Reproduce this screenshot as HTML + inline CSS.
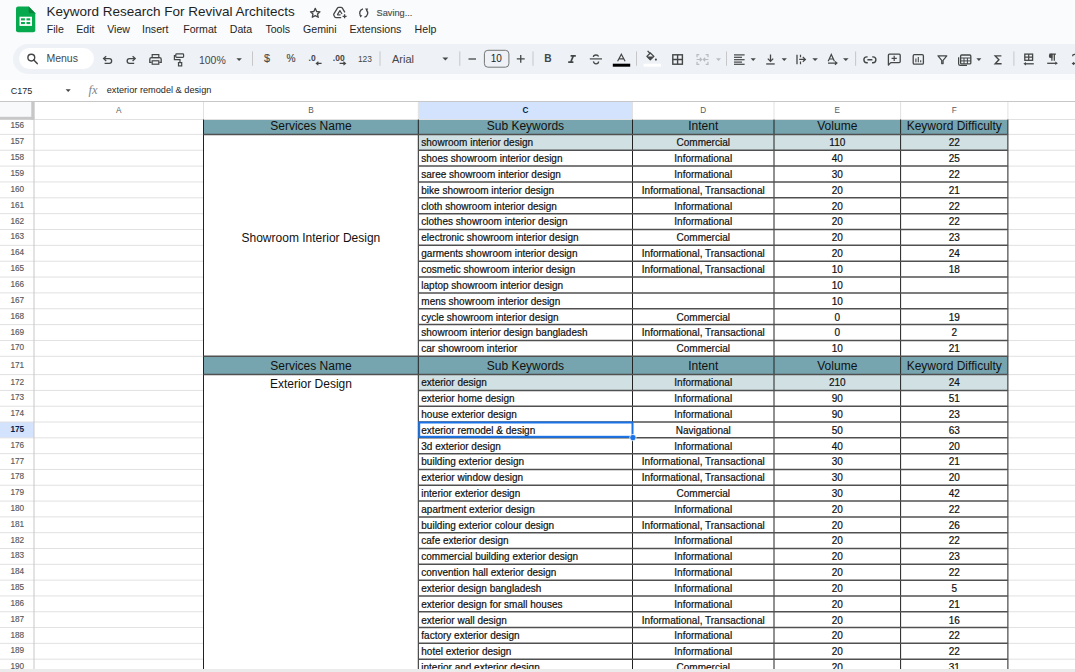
<!DOCTYPE html><html><head><meta charset="utf-8"><style>
html,body{margin:0;padding:0;width:1075px;height:672px;overflow:hidden;background:#fff;}
body{position:relative;font-family:"Liberation Sans", sans-serif;}
.t{position:absolute;white-space:nowrap;line-height:normal;}
.r{position:absolute;}
.b{-webkit-text-stroke:0.2px #111;}
.n{-webkit-text-stroke:0.15px #575a5e;}
svg{position:absolute;overflow:visible;}
</style></head><body>
<div class="r" style="left:0.00px;top:0.00px;width:1075.00px;height:79.50px;background:#f9fbfd;"></div>
<svg style="left:0;top:0" width="60" height="40" viewBox="0 0 60 40">
<path d="M18.2 6.4 H28.7 L35.3 13.3 V30.2 Q35.3 32.3 33.2 32.3 H18.2 Q16 32.3 16 30.2 V8.6 Q16 6.4 18.2 6.4 Z" fill="#06a94d"/>
<path d="M28.7 6.4 L35.3 13.3 H30.2 Q28.7 13.3 28.7 11.8 Z" fill="#05873b"/>
<rect x="19.5" y="16.7" width="12.5" height="9.2" fill="#fff"/>
<rect x="21" y="18.3" width="3.9" height="2.1" fill="#06a94d"/>
<rect x="26.5" y="18.3" width="3.7" height="2.1" fill="#06a94d"/>
<rect x="21" y="22.0" width="3.9" height="2.1" fill="#06a94d"/>
<rect x="26.5" y="22.0" width="3.7" height="2.1" fill="#06a94d"/>
</svg>
<div class="t" style="left:46.40px;top:4.18px;font-size:13.5px;color:#1f1f1f;font-weight:normal;">Keyword Research For Revival Architects</div>
<svg style="left:0;top:0" width="420" height="24" viewBox="0 0 420 24">
<path d="M315.25 8.3 L316.65 11.5 L320.0 11.8 L317.5 14.0 L318.25 17.3 L315.25 15.6 L312.25 17.3 L313.0 14.0 L310.5 11.8 L313.85 11.5 Z" fill="none" stroke="#444746" stroke-width="1.3" stroke-linejoin="round"/>
<path d="M341.2 17.6 H336.2 Q335.2 17.6 334.7 16.8 L333.9 15.4 Q333.5 14.6 333.9 13.9 L337.6 7.9 Q338.0 7.3 338.8 7.3 H341.0 Q341.8 7.3 342.2 7.9 L344.9 12.4" fill="none" stroke="#444746" stroke-width="1.3" stroke-linejoin="round"/>
<path d="M337.3 14.9 L339.9 10.6 L342.0 14.0" fill="none" stroke="#444746" stroke-width="1.2" stroke-linejoin="round"/>
<path d="M337.3 14.9 H340.6" stroke="#444746" stroke-width="1.2"/>
<path d="M344.6 14.3 V18.3 M342.6 16.3 H346.6" stroke="#444746" stroke-width="1.3"/>
<path d="M363.0 8.9 A4.3 4.3 0 0 0 361.0 16.2" fill="none" stroke="#444746" stroke-width="1.35"/>
<path d="M359.4 15.0 L362.4 15.4 L360.4 17.6 Z" fill="#444746"/>
<path d="M364.4 17.2 A4.3 4.3 0 0 0 366.4 9.9" fill="none" stroke="#444746" stroke-width="1.35"/>
<path d="M368.2 8.4 H365.0 L366.9 11.2 Z" fill="#444746"/>
</svg>
<div class="t n" style="left:376.60px;top:7.67px;font-size:9.2px;color:#444746;font-weight:normal;">Saving...</div>
<div class="t" style="left:46.80px;top:23.21px;font-size:10.6px;color:#1f1f1f;font-weight:normal;">File</div>
<div class="t" style="left:76.30px;top:23.21px;font-size:10.6px;color:#1f1f1f;font-weight:normal;">Edit</div>
<div class="t" style="left:107.20px;top:23.21px;font-size:10.6px;color:#1f1f1f;font-weight:normal;">View</div>
<div class="t" style="left:142.00px;top:23.21px;font-size:10.6px;color:#1f1f1f;font-weight:normal;">Insert</div>
<div class="t" style="left:183.20px;top:23.21px;font-size:10.6px;color:#1f1f1f;font-weight:normal;">Format</div>
<div class="t" style="left:229.80px;top:23.21px;font-size:10.6px;color:#1f1f1f;font-weight:normal;">Data</div>
<div class="t" style="left:265.40px;top:23.21px;font-size:10.6px;color:#1f1f1f;font-weight:normal;">Tools</div>
<div class="t" style="left:303.00px;top:23.21px;font-size:10.6px;color:#1f1f1f;font-weight:normal;">Gemini</div>
<div class="t" style="left:349.50px;top:23.21px;font-size:10.6px;color:#1f1f1f;font-weight:normal;">Extensions</div>
<div class="t" style="left:414.60px;top:23.21px;font-size:10.6px;color:#1f1f1f;font-weight:normal;">Help</div>
<div class="r" style="left:12.60px;top:44.00px;width:1100.00px;height:29.70px;background:#eef1f6;border-radius:15px;"></div>
<div class="r" style="left:18.60px;top:48.40px;width:75.90px;height:20.80px;background:#ffffff;border-radius:10.4px;"></div>
<svg style="left:0;top:0" width="1075" height="80" viewBox="0 0 1075 80"><circle cx="31.3" cy="57.6" r="3.4" fill="none" stroke="#444746" stroke-width="1.4"/><path d="M33.8 60.1 L37.2 63.6" stroke="#444746" stroke-width="1.5" stroke-linecap="round"/><path d="M104.2 58.6 H109.3 A2.35 2.35 0 0 1 109.3 63.3 H104.6" fill="none" stroke="#444746" stroke-width="1.3"/><path d="M106.2 56.3 L103.6 58.6 L106.2 60.9" fill="none" stroke="#444746" stroke-width="1.3"/><path d="M134.6 58.6 H129.5 A2.35 2.35 0 0 0 129.5 63.3 H134.2" fill="none" stroke="#444746" stroke-width="1.3"/><path d="M132.6 56.3 L135.2 58.6 L132.6 60.9" fill="none" stroke="#444746" stroke-width="1.3"/><rect x="152.2" y="54.6" width="6.6" height="3" fill="none" stroke="#444746" stroke-width="1.2"/><path d="M151.7 62.3 H149.8 V59.3 Q149.8 57.6 151.5 57.6 H159.5 Q161.2 57.6 161.2 59.3 V62.3 H159.3" fill="none" stroke="#444746" stroke-width="1.3"/><rect x="152.2" y="60.8" width="6.6" height="3.4" fill="none" stroke="#444746" stroke-width="1.2"/><rect x="175.8" y="53.9" width="7.8" height="3.4" rx="0.8" fill="none" stroke="#444746" stroke-width="1.2"/><path d="M175.8 55.6 H174.4 V59.6 H180.0 V62.6" fill="none" stroke="#444746" stroke-width="1.2"/><rect x="178.5" y="62.6" width="3.2" height="3.3" fill="none" stroke="#444746" stroke-width="1.2"/><path d="M236.4 58.3 H241.9 L239.15 61.099999999999994 Z" fill="#444746"/><path d="M442.4 57.6 H448.3 L445.35 60.4 Z" fill="#444746"/><path d="M716.0 58.3 H721.0 L718.5 61.099999999999994 Z" fill="#b9bcbf"/><path d="M750.6 58.3 H755.8 L753.2 61.099999999999994 Z" fill="#444746"/><path d="M781.6 58.3 H786.9 L784.25 61.099999999999994 Z" fill="#444746"/><path d="M812.3 58.3 H817.9 L815.0999999999999 61.099999999999994 Z" fill="#444746"/><path d="M843.0 58.3 H848.6 L845.8 61.099999999999994 Z" fill="#444746"/><path d="M976.4 58.3 H981.4 L978.9 61.099999999999994 Z" fill="#444746"/><rect x="252.0" y="51.4" width="1" height="14.4" fill="#c7c7c7"/><rect x="379.5" y="51.4" width="1" height="14.4" fill="#c7c7c7"/><rect x="459.3" y="51.4" width="1" height="14.4" fill="#c7c7c7"/><rect x="532.5" y="51.4" width="1" height="14.4" fill="#c7c7c7"/><rect x="636.0" y="51.4" width="1" height="14.4" fill="#c7c7c7"/><rect x="726.0" y="51.4" width="1" height="14.4" fill="#c7c7c7"/><rect x="855.1" y="51.4" width="1" height="14.4" fill="#c7c7c7"/><rect x="1013.4" y="51.4" width="1" height="14.4" fill="#c7c7c7"/><path d="M321.6 63.4 H316.6 M318.4 61.7 L316.3 63.4 L318.4 65.1" fill="none" stroke="#444746" stroke-width="1.1"/><path d="M339.6 63.4 H345.2 M343.4 61.7 L345.5 63.4 L343.4 65.1" fill="none" stroke="#444746" stroke-width="1.1"/><path d="M468.5 59.0 H476.0" stroke="#444746" stroke-width="1.3"/><path d="M516.8 58.8 H524.7 M520.75 54.9 V62.7" stroke="#444746" stroke-width="1.3"/><rect x="484.4" y="50.3" width="24.5" height="16.9" rx="3.5" fill="none" stroke="#747775" stroke-width="1"/><path d="M589.8 58.9 H602.0" stroke="#444746" stroke-width="1.2"/><path d="M598.6 56.6 Q598.0 55.0 596.0 55.0 Q593.4 55.0 593.4 57.0" fill="none" stroke="#444746" stroke-width="1.3"/><path d="M593.4 61.3 Q594.0 63.8 596.0 63.8 Q598.6 63.8 598.6 61.6" fill="none" stroke="#444746" stroke-width="1.3"/><path d="M617.6 61.2 L621.35 54.2 L625.1 61.2 M619.0 58.9 H623.7" fill="none" stroke="#444746" stroke-width="1.2"/><rect x="612.8" y="63.7" width="17.4" height="3.0" fill="#000"/><path d="M647.6 50.9 L650.4 53.7" stroke="#444746" stroke-width="1.3"/><path d="M646.9 56.4 L650.3 53.0 L653.9 56.4 L650.3 59.8 Z" fill="none" stroke="#444746" stroke-width="1.3" stroke-linejoin="round"/><path d="M646.9 56.4 H653.9 L650.3 59.8 Z" fill="#444746"/><circle cx="655.9" cy="59.6" r="1.05" fill="#444746"/><rect x="643.6" y="63.7" width="17.4" height="3.0" fill="#fff"/><rect x="672.8" y="54.8" width="9.6" height="9.4" fill="none" stroke="#444746" stroke-width="1.4"/><path d="M677.6 54.8 V64.2 M672.8 59.5 H682.4" stroke="#444746" stroke-width="1.4"/><path d="M699.3 54.7 H697.0 V57.2 M697.0 61.8 V64.3 H699.3 M705.7 54.7 H708.0 V57.2 M708.0 61.8 V64.3 H705.7" fill="none" stroke="#b9bcbf" stroke-width="1.2"/><path d="M696.6 59.5 H701.4 M699.8 57.8 L701.6 59.5 L699.8 61.2 M708.4 59.5 H703.6 M705.2 57.8 L703.4 59.5 L705.2 61.2" fill="none" stroke="#b9bcbf" stroke-width="1.2"/><rect x="734.0" y="54.3" width="10.6" height="1.2" fill="#444746"/><rect x="734.0" y="56.699999999999996" width="8.0" height="1.2" fill="#444746"/><rect x="734.0" y="59.1" width="10.6" height="1.2" fill="#444746"/><rect x="734.0" y="61.5" width="8.0" height="1.2" fill="#444746"/><rect x="734.0" y="63.699999999999996" width="10.6" height="1.2" fill="#444746"/><path d="M770.5 54.4 V61.2 M767.8 58.6 L770.5 61.4 L773.2 58.6" fill="none" stroke="#444746" stroke-width="1.3"/><rect x="766.2" y="63.3" width="8.5" height="1.3" fill="#444746"/><path d="M797.0 54.8 V64.2" stroke="#444746" stroke-width="1.3"/><path d="M799.2 59.4 H805.2 M802.8 57.0 L805.4 59.4 L802.8 61.8" fill="none" stroke="#444746" stroke-width="1.2"/><path d="M800.5 54.8 V57.2 M800.5 61.6 V64.2" stroke="#444746" stroke-width="1.2"/><path d="M828.2 61.2 L831.3 54.4 L834.4 61.2 M829.4 59.0 H833.2" fill="none" stroke="#444746" stroke-width="1.2"/><path d="M828.0 63.1 H836.6 M834.9 61.4 L837.0 63.1 L834.9 64.8" fill="none" stroke="#444746" stroke-width="1.1"/><path d="M867.6 56.9 H866.8 A2.9 2.9 0 0 0 866.8 62.7 H867.8 M872.2 56.9 H873.0 A2.9 2.9 0 0 1 873.0 62.7 H872.0 M867.4 59.8 H872.4" fill="none" stroke="#444746" stroke-width="1.4"/><path d="M888.4 65.0 V55.2 Q888.4 54.2 889.4 54.2 H899.2 Q900.2 54.2 900.2 55.2 V61.6 Q900.2 62.6 899.2 62.6 H890.8 Z" fill="none" stroke="#444746" stroke-width="1.3" stroke-linejoin="round"/><path d="M891.6 58.4 H896.8 M894.2 55.8 V61.0" stroke="#444746" stroke-width="1.2"/><rect x="913.2" y="54.7" width="10.2" height="9.4" rx="1.2" fill="none" stroke="#444746" stroke-width="1.3"/><path d="M915.9 58.6 V62.2 M918.3 56.9 V62.2 M920.7 60.2 V62.2" stroke="#444746" stroke-width="1.1"/><path d="M938.0 55.8 H946.8 L943.1 60.3 V63.6 H941.7 V60.3 Z" fill="none" stroke="#444746" stroke-width="1.2" stroke-linejoin="round"/><path d="M958.6 57.2 V63.8 Q958.6 65.4 960.2 65.4 H967" fill="none" stroke="#444746" stroke-width="1.2"/><rect x="960.6" y="55.0" width="10.2" height="8.9" rx="1" fill="none" stroke="#444746" stroke-width="1.3"/><path d="M960.6 58.0 H970.8 M960.6 60.9 H970.8 M964.0 58 V63.9 M967.4 58 V63.9" stroke="#444746" stroke-width="1.0"/><rect x="1024.8" y="54.1" width="7.8" height="6.2" fill="none" stroke="#444746" stroke-width="1.3"/><path d="M1028.7 54.1 V60.3 M1024.8 57.2 H1032.6" stroke="#444746" stroke-width="1.2"/><path d="M1033.8 63.8 H1025.0" stroke="#444746" stroke-width="1.3"/><path d="M1023.4 63.8 L1026.0 62.0 V65.6 Z" fill="#444746"/><path d="M1051.9 54.2 V60.7 M1054.3 54.2 V60.7 M1049.4 54.2 H1055.9" fill="none" stroke="#444746" stroke-width="1.3"/><path d="M1052.4 53.7 H1051.0 A2.2 2.2 0 0 0 1051.0 58.1 H1052.4 Z" fill="#444746"/><path d="M1047.2 63.3 H1056.0" stroke="#444746" stroke-width="1.3"/><path d="M1057.9 63.3 L1055.3 61.5 V65.1 Z" fill="#444746"/><path d="M1072.6 56.2 A1.8 1.8 0 0 1 1076.2 56.2" fill="none" stroke="#444746" stroke-width="1.3"/><path d="M1073.2 63.5 H1076" stroke="#444746" stroke-width="1.3"/><path d="M1071.6 63.5 L1074.0 61.8 V65.2 Z" fill="#444746"/><path d="M570.6 55.9 H575.8 M568.2 62.2 H573.4 M573.3 55.9 L570.7 62.2" fill="none" stroke="#444746" stroke-width="1.7"/><path d="M1001.4 55.9 H995.2 L998.9 59.8 L995.2 63.7 H1001.6" fill="none" stroke="#444746" stroke-width="1.4" stroke-linejoin="miter"/></svg>
<div class="t" style="left:46.40px;top:52.30px;font-size:10.5px;color:#444746;font-weight:normal;">Menus</div>
<div class="t" style="left:198.90px;top:53.90px;font-size:10.5px;color:#444746;font-weight:normal;">100%</div>
<div class="t n" style="left:264.00px;top:52.03px;font-size:10.8px;color:#444746;font-weight:normal;">$</div>
<div class="t n" style="left:286.60px;top:52.67px;font-size:10.2px;color:#444746;font-weight:normal;">%</div>
<div class="t" style="left:308.60px;top:52.91px;font-size:8.5px;color:#444746;font-weight:bold;">.0</div>
<div class="t" style="left:332.80px;top:52.91px;font-size:8.5px;color:#444746;font-weight:bold;">.00</div>
<div class="t" style="left:357.90px;top:54.40px;font-size:8.4px;color:#444746;font-weight:normal;">123</div>
<div class="t" style="left:392.00px;top:52.65px;font-size:11px;color:#444746;font-weight:normal;">Arial</div>
<div class="t" style="left:490.80px;top:53.25px;font-size:10px;color:#1f1f1f;font-weight:normal;">10</div>
<div class="t" style="left:544.20px;top:53.37px;font-size:10.2px;color:#444746;font-weight:bold;">B</div>
<div class="t" style="left:10.70px;top:85.86px;font-size:9.0px;color:#1f1f1f;font-weight:normal;">C175</div>
<svg style="left:0;top:0" width="80" height="100" viewBox="0 0 80 100"><path d="M65.6 89.2 H70.8 L68.2 92 Z" fill="#444746"/></svg>
<div class="t" style="left:88.60px;top:83.29px;font-size:12.5px;color:#80868b;font-weight:normal;font-family:'Liberation Serif',serif;font-style:italic;">fx</div>
<div class="t" style="left:106.70px;top:85.27px;font-size:9.2px;color:#1f1f1f;font-weight:normal;">exterior remodel &amp; design</div>
<svg style="left:0;top:0" width="1075" height="672" viewBox="0 0 1075 672"><rect x="0" y="101.5" width="34" height="18.0" fill="#f8f9fa"/><rect x="418.3" y="101.5" width="214.2" height="18.0" fill="#d3e3fd"/><rect x="0" y="422.03000000000003" width="34" height="15.810000000000002" fill="#d3e3fd"/><rect x="203.5" y="119.5" width="804.4" height="14.900000000000006" fill="#76a5af"/><rect x="203.5" y="356.3" width="804.4" height="18.30000000000001" fill="#76a5af"/><rect x="418.3" y="134.4" width="589.5999999999999" height="15.849999999999994" fill="#d0e0e3"/><rect x="418.3" y="374.6" width="589.5999999999999" height="15.810000000000002" fill="#d0e0e3"/><path d="M0 134.4 H203.5 M1007.9 134.4 H1075" stroke="#e1e1e1" stroke-width="1"/><path d="M0 150.25 H203.5 M1007.9 150.25 H1075" stroke="#e1e1e1" stroke-width="1"/><path d="M0 166.1 H203.5 M1007.9 166.1 H1075" stroke="#e1e1e1" stroke-width="1"/><path d="M0 181.95 H203.5 M1007.9 181.95 H1075" stroke="#e1e1e1" stroke-width="1"/><path d="M0 197.8 H203.5 M1007.9 197.8 H1075" stroke="#e1e1e1" stroke-width="1"/><path d="M0 213.65 H203.5 M1007.9 213.65 H1075" stroke="#e1e1e1" stroke-width="1"/><path d="M0 229.5 H203.5 M1007.9 229.5 H1075" stroke="#e1e1e1" stroke-width="1"/><path d="M0 245.35000000000002 H203.5 M1007.9 245.35000000000002 H1075" stroke="#e1e1e1" stroke-width="1"/><path d="M0 261.2 H203.5 M1007.9 261.2 H1075" stroke="#e1e1e1" stroke-width="1"/><path d="M0 277.05 H203.5 M1007.9 277.05 H1075" stroke="#e1e1e1" stroke-width="1"/><path d="M0 292.9 H203.5 M1007.9 292.9 H1075" stroke="#e1e1e1" stroke-width="1"/><path d="M0 308.75 H203.5 M1007.9 308.75 H1075" stroke="#e1e1e1" stroke-width="1"/><path d="M0 324.6 H203.5 M1007.9 324.6 H1075" stroke="#e1e1e1" stroke-width="1"/><path d="M0 340.45 H203.5 M1007.9 340.45 H1075" stroke="#e1e1e1" stroke-width="1"/><path d="M0 356.3 H203.5 M1007.9 356.3 H1075" stroke="#e1e1e1" stroke-width="1"/><path d="M0 374.6 H203.5 M1007.9 374.6 H1075" stroke="#e1e1e1" stroke-width="1"/><path d="M0 390.41 H203.5 M1007.9 390.41 H1075" stroke="#e1e1e1" stroke-width="1"/><path d="M0 406.22 H203.5 M1007.9 406.22 H1075" stroke="#e1e1e1" stroke-width="1"/><path d="M0 422.03000000000003 H203.5 M1007.9 422.03000000000003 H1075" stroke="#e1e1e1" stroke-width="1"/><path d="M0 437.84000000000003 H203.5 M1007.9 437.84000000000003 H1075" stroke="#e1e1e1" stroke-width="1"/><path d="M0 453.65000000000003 H203.5 M1007.9 453.65000000000003 H1075" stroke="#e1e1e1" stroke-width="1"/><path d="M0 469.46000000000004 H203.5 M1007.9 469.46000000000004 H1075" stroke="#e1e1e1" stroke-width="1"/><path d="M0 485.27000000000004 H203.5 M1007.9 485.27000000000004 H1075" stroke="#e1e1e1" stroke-width="1"/><path d="M0 501.08000000000004 H203.5 M1007.9 501.08000000000004 H1075" stroke="#e1e1e1" stroke-width="1"/><path d="M0 516.89 H203.5 M1007.9 516.89 H1075" stroke="#e1e1e1" stroke-width="1"/><path d="M0 532.7 H203.5 M1007.9 532.7 H1075" stroke="#e1e1e1" stroke-width="1"/><path d="M0 548.51 H203.5 M1007.9 548.51 H1075" stroke="#e1e1e1" stroke-width="1"/><path d="M0 564.32 H203.5 M1007.9 564.32 H1075" stroke="#e1e1e1" stroke-width="1"/><path d="M0 580.13 H203.5 M1007.9 580.13 H1075" stroke="#e1e1e1" stroke-width="1"/><path d="M0 595.94 H203.5 M1007.9 595.94 H1075" stroke="#e1e1e1" stroke-width="1"/><path d="M0 611.75 H203.5 M1007.9 611.75 H1075" stroke="#e1e1e1" stroke-width="1"/><path d="M0 627.5600000000001 H203.5 M1007.9 627.5600000000001 H1075" stroke="#e1e1e1" stroke-width="1"/><path d="M0 643.37 H203.5 M1007.9 643.37 H1075" stroke="#e1e1e1" stroke-width="1"/><path d="M0 659.1800000000001 H203.5 M1007.9 659.1800000000001 H1075" stroke="#e1e1e1" stroke-width="1"/><path d="M0 674.99 H203.5 M1007.9 674.99 H1075" stroke="#e1e1e1" stroke-width="1"/><path d="M203.5 101.5 V119.5" stroke="#e1e1e1" stroke-width="1"/><path d="M418.3 101.5 V119.5" stroke="#e1e1e1" stroke-width="1"/><path d="M632.5 101.5 V119.5" stroke="#e1e1e1" stroke-width="1"/><path d="M774.0 101.5 V119.5" stroke="#e1e1e1" stroke-width="1"/><path d="M900.6 101.5 V119.5" stroke="#e1e1e1" stroke-width="1"/><path d="M1007.9 101.5 V119.5" stroke="#e1e1e1" stroke-width="1"/><path d="M34.0 101.5 V672" stroke="#c7c7c7" stroke-width="1"/><path d="M0 101.5 H1075" stroke="#c7c7c7" stroke-width="1"/><path d="M34 119.5 H1075" stroke="#e1e1e1" stroke-width="1"/><rect x="0" y="116.8" width="34.3" height="3" fill="#c7c7c7"/><rect x="31.3" y="101.5" width="3" height="18.3" fill="#c7c7c7"/><path d="M203.5 119.5 V672" stroke="#222222" stroke-width="1"/><path d="M418.3 119.5 V672" stroke="#222222" stroke-width="1"/><path d="M632.5 119.5 V672" stroke="#222222" stroke-width="1"/><path d="M774.0 119.5 V672" stroke="#222222" stroke-width="1"/><path d="M900.6 119.5 V672" stroke="#222222" stroke-width="1"/><path d="M1007.9 119.5 V672" stroke="#222222" stroke-width="1"/><path d="M418.3 134.4 H1007.9" stroke="#505050" stroke-width="1.5"/><path d="M418.3 150.25 H1007.9" stroke="#505050" stroke-width="1.5"/><path d="M418.3 166.1 H1007.9" stroke="#505050" stroke-width="1.5"/><path d="M418.3 181.95 H1007.9" stroke="#505050" stroke-width="1.5"/><path d="M418.3 197.8 H1007.9" stroke="#505050" stroke-width="1.5"/><path d="M418.3 213.65 H1007.9" stroke="#505050" stroke-width="1.5"/><path d="M418.3 229.5 H1007.9" stroke="#505050" stroke-width="1.5"/><path d="M418.3 245.35000000000002 H1007.9" stroke="#505050" stroke-width="1.5"/><path d="M418.3 261.2 H1007.9" stroke="#505050" stroke-width="1.5"/><path d="M418.3 277.05 H1007.9" stroke="#505050" stroke-width="1.5"/><path d="M418.3 292.9 H1007.9" stroke="#505050" stroke-width="1.5"/><path d="M418.3 308.75 H1007.9" stroke="#505050" stroke-width="1.5"/><path d="M418.3 324.6 H1007.9" stroke="#505050" stroke-width="1.5"/><path d="M418.3 340.45 H1007.9" stroke="#505050" stroke-width="1.5"/><path d="M418.3 356.3 H1007.9" stroke="#505050" stroke-width="1.5"/><path d="M418.3 374.6 H1007.9" stroke="#505050" stroke-width="1.5"/><path d="M418.3 390.41 H1007.9" stroke="#505050" stroke-width="1.5"/><path d="M418.3 406.22 H1007.9" stroke="#505050" stroke-width="1.5"/><path d="M418.3 422.03000000000003 H1007.9" stroke="#505050" stroke-width="1.5"/><path d="M418.3 437.84000000000003 H1007.9" stroke="#505050" stroke-width="1.5"/><path d="M418.3 453.65000000000003 H1007.9" stroke="#505050" stroke-width="1.5"/><path d="M418.3 469.46000000000004 H1007.9" stroke="#505050" stroke-width="1.5"/><path d="M418.3 485.27000000000004 H1007.9" stroke="#505050" stroke-width="1.5"/><path d="M418.3 501.08000000000004 H1007.9" stroke="#505050" stroke-width="1.5"/><path d="M418.3 516.89 H1007.9" stroke="#505050" stroke-width="1.5"/><path d="M418.3 532.7 H1007.9" stroke="#505050" stroke-width="1.5"/><path d="M418.3 548.51 H1007.9" stroke="#505050" stroke-width="1.5"/><path d="M418.3 564.32 H1007.9" stroke="#505050" stroke-width="1.5"/><path d="M418.3 580.13 H1007.9" stroke="#505050" stroke-width="1.5"/><path d="M418.3 595.94 H1007.9" stroke="#505050" stroke-width="1.5"/><path d="M418.3 611.75 H1007.9" stroke="#505050" stroke-width="1.5"/><path d="M418.3 627.5600000000001 H1007.9" stroke="#505050" stroke-width="1.5"/><path d="M418.3 643.37 H1007.9" stroke="#505050" stroke-width="1.5"/><path d="M418.3 659.1800000000001 H1007.9" stroke="#505050" stroke-width="1.5"/><path d="M203.5 134.4 H418.3" stroke="#505050" stroke-width="1.5"/><path d="M203.5 356.3 H418.3" stroke="#505050" stroke-width="1.5"/><path d="M203.5 374.6 H418.3" stroke="#505050" stroke-width="1.5"/></svg>
<div class="t" style="left:88.75px;width:60px;text-align:center;top:105.68px;font-size:8.2px;color:#575a5e;font-weight:normal;">A</div>
<div class="t" style="left:280.90px;width:60px;text-align:center;top:105.68px;font-size:8.2px;color:#575a5e;font-weight:normal;">B</div>
<div class="t" style="left:495.40px;width:60px;text-align:center;top:105.68px;font-size:8.2px;color:#041e49;font-weight:bold;">C</div>
<div class="t" style="left:673.25px;width:60px;text-align:center;top:105.68px;font-size:8.2px;color:#575a5e;font-weight:normal;">D</div>
<div class="t" style="left:807.30px;width:60px;text-align:center;top:105.68px;font-size:8.2px;color:#575a5e;font-weight:normal;">E</div>
<div class="t" style="left:924.25px;width:60px;text-align:center;top:105.68px;font-size:8.2px;color:#575a5e;font-weight:normal;">F</div>
<div class="t n" style="left:0.30px;width:34px;text-align:center;top:120.58px;font-size:8.2px;color:#575a5e;font-weight:normal;">156</div>
<div class="t n" style="left:0.30px;width:34px;text-align:center;top:137.38px;font-size:8.2px;color:#575a5e;font-weight:normal;">157</div>
<div class="t n" style="left:0.30px;width:34px;text-align:center;top:153.23px;font-size:8.2px;color:#575a5e;font-weight:normal;">158</div>
<div class="t n" style="left:0.30px;width:34px;text-align:center;top:169.08px;font-size:8.2px;color:#575a5e;font-weight:normal;">159</div>
<div class="t n" style="left:0.30px;width:34px;text-align:center;top:184.93px;font-size:8.2px;color:#575a5e;font-weight:normal;">160</div>
<div class="t n" style="left:0.30px;width:34px;text-align:center;top:200.78px;font-size:8.2px;color:#575a5e;font-weight:normal;">161</div>
<div class="t n" style="left:0.30px;width:34px;text-align:center;top:216.63px;font-size:8.2px;color:#575a5e;font-weight:normal;">162</div>
<div class="t n" style="left:0.30px;width:34px;text-align:center;top:232.48px;font-size:8.2px;color:#575a5e;font-weight:normal;">163</div>
<div class="t n" style="left:0.30px;width:34px;text-align:center;top:248.33px;font-size:8.2px;color:#575a5e;font-weight:normal;">164</div>
<div class="t n" style="left:0.30px;width:34px;text-align:center;top:264.18px;font-size:8.2px;color:#575a5e;font-weight:normal;">165</div>
<div class="t n" style="left:0.30px;width:34px;text-align:center;top:280.03px;font-size:8.2px;color:#575a5e;font-weight:normal;">166</div>
<div class="t n" style="left:0.30px;width:34px;text-align:center;top:295.88px;font-size:8.2px;color:#575a5e;font-weight:normal;">167</div>
<div class="t n" style="left:0.30px;width:34px;text-align:center;top:311.73px;font-size:8.2px;color:#575a5e;font-weight:normal;">168</div>
<div class="t n" style="left:0.30px;width:34px;text-align:center;top:327.58px;font-size:8.2px;color:#575a5e;font-weight:normal;">169</div>
<div class="t n" style="left:0.30px;width:34px;text-align:center;top:343.43px;font-size:8.2px;color:#575a5e;font-weight:normal;">170</div>
<div class="t n" style="left:0.30px;width:34px;text-align:center;top:360.58px;font-size:8.2px;color:#575a5e;font-weight:normal;">171</div>
<div class="t n" style="left:0.30px;width:34px;text-align:center;top:377.58px;font-size:8.2px;color:#575a5e;font-weight:normal;">172</div>
<div class="t n" style="left:0.30px;width:34px;text-align:center;top:393.39px;font-size:8.2px;color:#575a5e;font-weight:normal;">173</div>
<div class="t n" style="left:0.30px;width:34px;text-align:center;top:409.20px;font-size:8.2px;color:#575a5e;font-weight:normal;">174</div>
<div class="t" style="left:0.30px;width:34px;text-align:center;top:425.01px;font-size:8.2px;color:#041e49;font-weight:bold;">175</div>
<div class="t n" style="left:0.30px;width:34px;text-align:center;top:440.82px;font-size:8.2px;color:#575a5e;font-weight:normal;">176</div>
<div class="t n" style="left:0.30px;width:34px;text-align:center;top:456.63px;font-size:8.2px;color:#575a5e;font-weight:normal;">177</div>
<div class="t n" style="left:0.30px;width:34px;text-align:center;top:472.44px;font-size:8.2px;color:#575a5e;font-weight:normal;">178</div>
<div class="t n" style="left:0.30px;width:34px;text-align:center;top:488.25px;font-size:8.2px;color:#575a5e;font-weight:normal;">179</div>
<div class="t n" style="left:0.30px;width:34px;text-align:center;top:504.06px;font-size:8.2px;color:#575a5e;font-weight:normal;">180</div>
<div class="t n" style="left:0.30px;width:34px;text-align:center;top:519.87px;font-size:8.2px;color:#575a5e;font-weight:normal;">181</div>
<div class="t n" style="left:0.30px;width:34px;text-align:center;top:535.68px;font-size:8.2px;color:#575a5e;font-weight:normal;">182</div>
<div class="t n" style="left:0.30px;width:34px;text-align:center;top:551.49px;font-size:8.2px;color:#575a5e;font-weight:normal;">183</div>
<div class="t n" style="left:0.30px;width:34px;text-align:center;top:567.30px;font-size:8.2px;color:#575a5e;font-weight:normal;">184</div>
<div class="t n" style="left:0.30px;width:34px;text-align:center;top:583.11px;font-size:8.2px;color:#575a5e;font-weight:normal;">185</div>
<div class="t n" style="left:0.30px;width:34px;text-align:center;top:598.92px;font-size:8.2px;color:#575a5e;font-weight:normal;">186</div>
<div class="t n" style="left:0.30px;width:34px;text-align:center;top:614.73px;font-size:8.2px;color:#575a5e;font-weight:normal;">187</div>
<div class="t n" style="left:0.30px;width:34px;text-align:center;top:630.54px;font-size:8.2px;color:#575a5e;font-weight:normal;">188</div>
<div class="t n" style="left:0.30px;width:34px;text-align:center;top:646.35px;font-size:8.2px;color:#575a5e;font-weight:normal;">189</div>
<div class="t n" style="left:0.30px;width:34px;text-align:center;top:662.16px;font-size:8.2px;color:#575a5e;font-weight:normal;">190</div>
<div class="t" style="left:210.90px;width:200px;text-align:center;top:118.74px;font-size:12px;color:#111111;font-weight:normal;">Services Name</div>
<div class="t" style="left:425.40px;width:200px;text-align:center;top:118.74px;font-size:12px;color:#111111;font-weight:normal;">Sub Keywords</div>
<div class="t" style="left:603.25px;width:200px;text-align:center;top:118.74px;font-size:12px;color:#111111;font-weight:normal;">Intent</div>
<div class="t" style="left:737.30px;width:200px;text-align:center;top:118.74px;font-size:12px;color:#111111;font-weight:normal;">Volume</div>
<div class="t" style="left:854.25px;width:200px;text-align:center;top:118.74px;font-size:12px;color:#111111;font-weight:normal;">Keyword Difficulty</div>
<div class="t" style="left:210.90px;width:200px;text-align:center;top:358.54px;font-size:12px;color:#111111;font-weight:normal;">Services Name</div>
<div class="t" style="left:425.40px;width:200px;text-align:center;top:358.54px;font-size:12px;color:#111111;font-weight:normal;">Sub Keywords</div>
<div class="t" style="left:603.25px;width:200px;text-align:center;top:358.54px;font-size:12px;color:#111111;font-weight:normal;">Intent</div>
<div class="t" style="left:737.30px;width:200px;text-align:center;top:358.54px;font-size:12px;color:#111111;font-weight:normal;">Volume</div>
<div class="t" style="left:854.25px;width:200px;text-align:center;top:358.54px;font-size:12px;color:#111111;font-weight:normal;">Keyword Difficulty</div>
<div class="t" style="left:205.90px;width:210px;text-align:center;top:231.04px;font-size:12px;color:#111111;font-weight:normal;">Showroom Interior Design</div>
<div class="t" style="left:205.90px;width:210px;text-align:center;top:376.74px;font-size:12px;color:#111111;font-weight:normal;">Exterior Design</div>
<div class="t b" style="left:421.30px;top:137.15px;font-size:10px;color:#111111;font-weight:normal;">showroom interior design</div>
<div class="t b" style="left:633.25px;width:140px;text-align:center;top:137.15px;font-size:10px;color:#111111;font-weight:normal;">Commercial</div>
<div class="t b" style="left:777.30px;width:120px;text-align:center;top:137.15px;font-size:10px;color:#111111;font-weight:normal;">110</div>
<div class="t b" style="left:904.25px;width:100px;text-align:center;top:137.15px;font-size:10px;color:#111111;font-weight:normal;">22</div>
<div class="t b" style="left:421.30px;top:153.00px;font-size:10px;color:#111111;font-weight:normal;">shoes showroom interior design</div>
<div class="t b" style="left:633.25px;width:140px;text-align:center;top:153.00px;font-size:10px;color:#111111;font-weight:normal;">Informational</div>
<div class="t b" style="left:777.30px;width:120px;text-align:center;top:153.00px;font-size:10px;color:#111111;font-weight:normal;">40</div>
<div class="t b" style="left:904.25px;width:100px;text-align:center;top:153.00px;font-size:10px;color:#111111;font-weight:normal;">25</div>
<div class="t b" style="left:421.30px;top:168.85px;font-size:10px;color:#111111;font-weight:normal;">saree showroom interior design</div>
<div class="t b" style="left:633.25px;width:140px;text-align:center;top:168.85px;font-size:10px;color:#111111;font-weight:normal;">Informational</div>
<div class="t b" style="left:777.30px;width:120px;text-align:center;top:168.85px;font-size:10px;color:#111111;font-weight:normal;">30</div>
<div class="t b" style="left:904.25px;width:100px;text-align:center;top:168.85px;font-size:10px;color:#111111;font-weight:normal;">22</div>
<div class="t b" style="left:421.30px;top:184.70px;font-size:10px;color:#111111;font-weight:normal;">bike showroom interior design</div>
<div class="t b" style="left:633.25px;width:140px;text-align:center;top:184.70px;font-size:10px;color:#111111;font-weight:normal;">Informational, Transactional</div>
<div class="t b" style="left:777.30px;width:120px;text-align:center;top:184.70px;font-size:10px;color:#111111;font-weight:normal;">20</div>
<div class="t b" style="left:904.25px;width:100px;text-align:center;top:184.70px;font-size:10px;color:#111111;font-weight:normal;">21</div>
<div class="t b" style="left:421.30px;top:200.55px;font-size:10px;color:#111111;font-weight:normal;">cloth showroom interior design</div>
<div class="t b" style="left:633.25px;width:140px;text-align:center;top:200.55px;font-size:10px;color:#111111;font-weight:normal;">Informational</div>
<div class="t b" style="left:777.30px;width:120px;text-align:center;top:200.55px;font-size:10px;color:#111111;font-weight:normal;">20</div>
<div class="t b" style="left:904.25px;width:100px;text-align:center;top:200.55px;font-size:10px;color:#111111;font-weight:normal;">22</div>
<div class="t b" style="left:421.30px;top:216.40px;font-size:10px;color:#111111;font-weight:normal;">clothes showroom interior design</div>
<div class="t b" style="left:633.25px;width:140px;text-align:center;top:216.40px;font-size:10px;color:#111111;font-weight:normal;">Informational</div>
<div class="t b" style="left:777.30px;width:120px;text-align:center;top:216.40px;font-size:10px;color:#111111;font-weight:normal;">20</div>
<div class="t b" style="left:904.25px;width:100px;text-align:center;top:216.40px;font-size:10px;color:#111111;font-weight:normal;">22</div>
<div class="t b" style="left:421.30px;top:232.25px;font-size:10px;color:#111111;font-weight:normal;">electronic showroom interior design</div>
<div class="t b" style="left:633.25px;width:140px;text-align:center;top:232.25px;font-size:10px;color:#111111;font-weight:normal;">Commercial</div>
<div class="t b" style="left:777.30px;width:120px;text-align:center;top:232.25px;font-size:10px;color:#111111;font-weight:normal;">20</div>
<div class="t b" style="left:904.25px;width:100px;text-align:center;top:232.25px;font-size:10px;color:#111111;font-weight:normal;">23</div>
<div class="t b" style="left:421.30px;top:248.10px;font-size:10px;color:#111111;font-weight:normal;">garments showroom interior design</div>
<div class="t b" style="left:633.25px;width:140px;text-align:center;top:248.10px;font-size:10px;color:#111111;font-weight:normal;">Informational, Transactional</div>
<div class="t b" style="left:777.30px;width:120px;text-align:center;top:248.10px;font-size:10px;color:#111111;font-weight:normal;">20</div>
<div class="t b" style="left:904.25px;width:100px;text-align:center;top:248.10px;font-size:10px;color:#111111;font-weight:normal;">24</div>
<div class="t b" style="left:421.30px;top:263.95px;font-size:10px;color:#111111;font-weight:normal;">cosmetic showroom interior design</div>
<div class="t b" style="left:633.25px;width:140px;text-align:center;top:263.95px;font-size:10px;color:#111111;font-weight:normal;">Informational, Transactional</div>
<div class="t b" style="left:777.30px;width:120px;text-align:center;top:263.95px;font-size:10px;color:#111111;font-weight:normal;">10</div>
<div class="t b" style="left:904.25px;width:100px;text-align:center;top:263.95px;font-size:10px;color:#111111;font-weight:normal;">18</div>
<div class="t b" style="left:421.30px;top:279.80px;font-size:10px;color:#111111;font-weight:normal;">laptop showroom interior design</div>
<div class="t b" style="left:777.30px;width:120px;text-align:center;top:279.80px;font-size:10px;color:#111111;font-weight:normal;">10</div>
<div class="t b" style="left:421.30px;top:295.65px;font-size:10px;color:#111111;font-weight:normal;">mens showroom interior design</div>
<div class="t b" style="left:777.30px;width:120px;text-align:center;top:295.65px;font-size:10px;color:#111111;font-weight:normal;">10</div>
<div class="t b" style="left:421.30px;top:311.50px;font-size:10px;color:#111111;font-weight:normal;">cycle showroom interior design</div>
<div class="t b" style="left:633.25px;width:140px;text-align:center;top:311.50px;font-size:10px;color:#111111;font-weight:normal;">Commercial</div>
<div class="t b" style="left:777.30px;width:120px;text-align:center;top:311.50px;font-size:10px;color:#111111;font-weight:normal;">0</div>
<div class="t b" style="left:904.25px;width:100px;text-align:center;top:311.50px;font-size:10px;color:#111111;font-weight:normal;">19</div>
<div class="t b" style="left:421.30px;top:327.35px;font-size:10px;color:#111111;font-weight:normal;">showroom interior design bangladesh</div>
<div class="t b" style="left:633.25px;width:140px;text-align:center;top:327.35px;font-size:10px;color:#111111;font-weight:normal;">Informational, Transactional</div>
<div class="t b" style="left:777.30px;width:120px;text-align:center;top:327.35px;font-size:10px;color:#111111;font-weight:normal;">0</div>
<div class="t b" style="left:904.25px;width:100px;text-align:center;top:327.35px;font-size:10px;color:#111111;font-weight:normal;">2</div>
<div class="t b" style="left:421.30px;top:343.20px;font-size:10px;color:#111111;font-weight:normal;">car showroom interior</div>
<div class="t b" style="left:633.25px;width:140px;text-align:center;top:343.20px;font-size:10px;color:#111111;font-weight:normal;">Commercial</div>
<div class="t b" style="left:777.30px;width:120px;text-align:center;top:343.20px;font-size:10px;color:#111111;font-weight:normal;">10</div>
<div class="t b" style="left:904.25px;width:100px;text-align:center;top:343.20px;font-size:10px;color:#111111;font-weight:normal;">21</div>
<div class="t b" style="left:421.30px;top:377.35px;font-size:10px;color:#111111;font-weight:normal;">exterior design</div>
<div class="t b" style="left:633.25px;width:140px;text-align:center;top:377.35px;font-size:10px;color:#111111;font-weight:normal;">Informational</div>
<div class="t b" style="left:777.30px;width:120px;text-align:center;top:377.35px;font-size:10px;color:#111111;font-weight:normal;">210</div>
<div class="t b" style="left:904.25px;width:100px;text-align:center;top:377.35px;font-size:10px;color:#111111;font-weight:normal;">24</div>
<div class="t b" style="left:421.30px;top:393.16px;font-size:10px;color:#111111;font-weight:normal;">exterior home design</div>
<div class="t b" style="left:633.25px;width:140px;text-align:center;top:393.16px;font-size:10px;color:#111111;font-weight:normal;">Informational</div>
<div class="t b" style="left:777.30px;width:120px;text-align:center;top:393.16px;font-size:10px;color:#111111;font-weight:normal;">90</div>
<div class="t b" style="left:904.25px;width:100px;text-align:center;top:393.16px;font-size:10px;color:#111111;font-weight:normal;">51</div>
<div class="t b" style="left:421.30px;top:408.97px;font-size:10px;color:#111111;font-weight:normal;">house exterior design</div>
<div class="t b" style="left:633.25px;width:140px;text-align:center;top:408.97px;font-size:10px;color:#111111;font-weight:normal;">Informational</div>
<div class="t b" style="left:777.30px;width:120px;text-align:center;top:408.97px;font-size:10px;color:#111111;font-weight:normal;">90</div>
<div class="t b" style="left:904.25px;width:100px;text-align:center;top:408.97px;font-size:10px;color:#111111;font-weight:normal;">23</div>
<div class="t b" style="left:421.30px;top:424.78px;font-size:10px;color:#111111;font-weight:normal;">exterior remodel &amp; design</div>
<div class="t b" style="left:633.25px;width:140px;text-align:center;top:424.78px;font-size:10px;color:#111111;font-weight:normal;">Navigational</div>
<div class="t b" style="left:777.30px;width:120px;text-align:center;top:424.78px;font-size:10px;color:#111111;font-weight:normal;">50</div>
<div class="t b" style="left:904.25px;width:100px;text-align:center;top:424.78px;font-size:10px;color:#111111;font-weight:normal;">63</div>
<div class="t b" style="left:421.30px;top:440.59px;font-size:10px;color:#111111;font-weight:normal;">3d exterior design</div>
<div class="t b" style="left:633.25px;width:140px;text-align:center;top:440.59px;font-size:10px;color:#111111;font-weight:normal;">Informational</div>
<div class="t b" style="left:777.30px;width:120px;text-align:center;top:440.59px;font-size:10px;color:#111111;font-weight:normal;">40</div>
<div class="t b" style="left:904.25px;width:100px;text-align:center;top:440.59px;font-size:10px;color:#111111;font-weight:normal;">20</div>
<div class="t b" style="left:421.30px;top:456.40px;font-size:10px;color:#111111;font-weight:normal;">building exterior design</div>
<div class="t b" style="left:633.25px;width:140px;text-align:center;top:456.40px;font-size:10px;color:#111111;font-weight:normal;">Informational, Transactional</div>
<div class="t b" style="left:777.30px;width:120px;text-align:center;top:456.40px;font-size:10px;color:#111111;font-weight:normal;">30</div>
<div class="t b" style="left:904.25px;width:100px;text-align:center;top:456.40px;font-size:10px;color:#111111;font-weight:normal;">21</div>
<div class="t b" style="left:421.30px;top:472.21px;font-size:10px;color:#111111;font-weight:normal;">exterior window design</div>
<div class="t b" style="left:633.25px;width:140px;text-align:center;top:472.21px;font-size:10px;color:#111111;font-weight:normal;">Informational, Transactional</div>
<div class="t b" style="left:777.30px;width:120px;text-align:center;top:472.21px;font-size:10px;color:#111111;font-weight:normal;">30</div>
<div class="t b" style="left:904.25px;width:100px;text-align:center;top:472.21px;font-size:10px;color:#111111;font-weight:normal;">20</div>
<div class="t b" style="left:421.30px;top:488.02px;font-size:10px;color:#111111;font-weight:normal;">interior exterior design</div>
<div class="t b" style="left:633.25px;width:140px;text-align:center;top:488.02px;font-size:10px;color:#111111;font-weight:normal;">Commercial</div>
<div class="t b" style="left:777.30px;width:120px;text-align:center;top:488.02px;font-size:10px;color:#111111;font-weight:normal;">30</div>
<div class="t b" style="left:904.25px;width:100px;text-align:center;top:488.02px;font-size:10px;color:#111111;font-weight:normal;">42</div>
<div class="t b" style="left:421.30px;top:503.83px;font-size:10px;color:#111111;font-weight:normal;">apartment exterior design</div>
<div class="t b" style="left:633.25px;width:140px;text-align:center;top:503.83px;font-size:10px;color:#111111;font-weight:normal;">Informational</div>
<div class="t b" style="left:777.30px;width:120px;text-align:center;top:503.83px;font-size:10px;color:#111111;font-weight:normal;">20</div>
<div class="t b" style="left:904.25px;width:100px;text-align:center;top:503.83px;font-size:10px;color:#111111;font-weight:normal;">22</div>
<div class="t b" style="left:421.30px;top:519.64px;font-size:10px;color:#111111;font-weight:normal;">building exterior colour design</div>
<div class="t b" style="left:633.25px;width:140px;text-align:center;top:519.64px;font-size:10px;color:#111111;font-weight:normal;">Informational, Transactional</div>
<div class="t b" style="left:777.30px;width:120px;text-align:center;top:519.64px;font-size:10px;color:#111111;font-weight:normal;">20</div>
<div class="t b" style="left:904.25px;width:100px;text-align:center;top:519.64px;font-size:10px;color:#111111;font-weight:normal;">26</div>
<div class="t b" style="left:421.30px;top:535.45px;font-size:10px;color:#111111;font-weight:normal;">cafe exterior design</div>
<div class="t b" style="left:633.25px;width:140px;text-align:center;top:535.45px;font-size:10px;color:#111111;font-weight:normal;">Informational</div>
<div class="t b" style="left:777.30px;width:120px;text-align:center;top:535.45px;font-size:10px;color:#111111;font-weight:normal;">20</div>
<div class="t b" style="left:904.25px;width:100px;text-align:center;top:535.45px;font-size:10px;color:#111111;font-weight:normal;">22</div>
<div class="t b" style="left:421.30px;top:551.26px;font-size:10px;color:#111111;font-weight:normal;">commercial building exterior design</div>
<div class="t b" style="left:633.25px;width:140px;text-align:center;top:551.26px;font-size:10px;color:#111111;font-weight:normal;">Informational</div>
<div class="t b" style="left:777.30px;width:120px;text-align:center;top:551.26px;font-size:10px;color:#111111;font-weight:normal;">20</div>
<div class="t b" style="left:904.25px;width:100px;text-align:center;top:551.26px;font-size:10px;color:#111111;font-weight:normal;">23</div>
<div class="t b" style="left:421.30px;top:567.07px;font-size:10px;color:#111111;font-weight:normal;">convention hall exterior design</div>
<div class="t b" style="left:633.25px;width:140px;text-align:center;top:567.07px;font-size:10px;color:#111111;font-weight:normal;">Informational</div>
<div class="t b" style="left:777.30px;width:120px;text-align:center;top:567.07px;font-size:10px;color:#111111;font-weight:normal;">20</div>
<div class="t b" style="left:904.25px;width:100px;text-align:center;top:567.07px;font-size:10px;color:#111111;font-weight:normal;">22</div>
<div class="t b" style="left:421.30px;top:582.88px;font-size:10px;color:#111111;font-weight:normal;">exterior design bangladesh</div>
<div class="t b" style="left:633.25px;width:140px;text-align:center;top:582.88px;font-size:10px;color:#111111;font-weight:normal;">Informational</div>
<div class="t b" style="left:777.30px;width:120px;text-align:center;top:582.88px;font-size:10px;color:#111111;font-weight:normal;">20</div>
<div class="t b" style="left:904.25px;width:100px;text-align:center;top:582.88px;font-size:10px;color:#111111;font-weight:normal;">5</div>
<div class="t b" style="left:421.30px;top:598.69px;font-size:10px;color:#111111;font-weight:normal;">exterior design for small houses</div>
<div class="t b" style="left:633.25px;width:140px;text-align:center;top:598.69px;font-size:10px;color:#111111;font-weight:normal;">Informational</div>
<div class="t b" style="left:777.30px;width:120px;text-align:center;top:598.69px;font-size:10px;color:#111111;font-weight:normal;">20</div>
<div class="t b" style="left:904.25px;width:100px;text-align:center;top:598.69px;font-size:10px;color:#111111;font-weight:normal;">21</div>
<div class="t b" style="left:421.30px;top:614.50px;font-size:10px;color:#111111;font-weight:normal;">exterior wall design</div>
<div class="t b" style="left:633.25px;width:140px;text-align:center;top:614.50px;font-size:10px;color:#111111;font-weight:normal;">Informational, Transactional</div>
<div class="t b" style="left:777.30px;width:120px;text-align:center;top:614.50px;font-size:10px;color:#111111;font-weight:normal;">20</div>
<div class="t b" style="left:904.25px;width:100px;text-align:center;top:614.50px;font-size:10px;color:#111111;font-weight:normal;">16</div>
<div class="t b" style="left:421.30px;top:630.31px;font-size:10px;color:#111111;font-weight:normal;">factory exterior design</div>
<div class="t b" style="left:633.25px;width:140px;text-align:center;top:630.31px;font-size:10px;color:#111111;font-weight:normal;">Informational</div>
<div class="t b" style="left:777.30px;width:120px;text-align:center;top:630.31px;font-size:10px;color:#111111;font-weight:normal;">20</div>
<div class="t b" style="left:904.25px;width:100px;text-align:center;top:630.31px;font-size:10px;color:#111111;font-weight:normal;">22</div>
<div class="t b" style="left:421.30px;top:646.12px;font-size:10px;color:#111111;font-weight:normal;">hotel exterior design</div>
<div class="t b" style="left:633.25px;width:140px;text-align:center;top:646.12px;font-size:10px;color:#111111;font-weight:normal;">Informational</div>
<div class="t b" style="left:777.30px;width:120px;text-align:center;top:646.12px;font-size:10px;color:#111111;font-weight:normal;">20</div>
<div class="t b" style="left:904.25px;width:100px;text-align:center;top:646.12px;font-size:10px;color:#111111;font-weight:normal;">22</div>
<div class="t b" style="left:421.30px;top:661.93px;font-size:10px;color:#111111;font-weight:normal;">interior and exterior design</div>
<div class="t b" style="left:633.25px;width:140px;text-align:center;top:661.93px;font-size:10px;color:#111111;font-weight:normal;">Commercial</div>
<div class="t b" style="left:777.30px;width:120px;text-align:center;top:661.93px;font-size:10px;color:#111111;font-weight:normal;">20</div>
<div class="t b" style="left:904.25px;width:100px;text-align:center;top:661.93px;font-size:10px;color:#111111;font-weight:normal;">31</div>
<svg style="left:0;top:0" width="1075" height="672" viewBox="0 0 1075 672"><rect x="419.2" y="422.5" width="213.29999999999998" height="14.3" fill="none" stroke="#1a73e8" stroke-width="2"/><circle cx="632.9" cy="437.6" r="3.2" fill="#1a73e8" stroke="#fff" stroke-width="0.8"/></svg>
<div class="r" style="left:0.00px;top:669.20px;width:1075.00px;height:3.00px;background:#ebebeb;"></div>
</body></html>
